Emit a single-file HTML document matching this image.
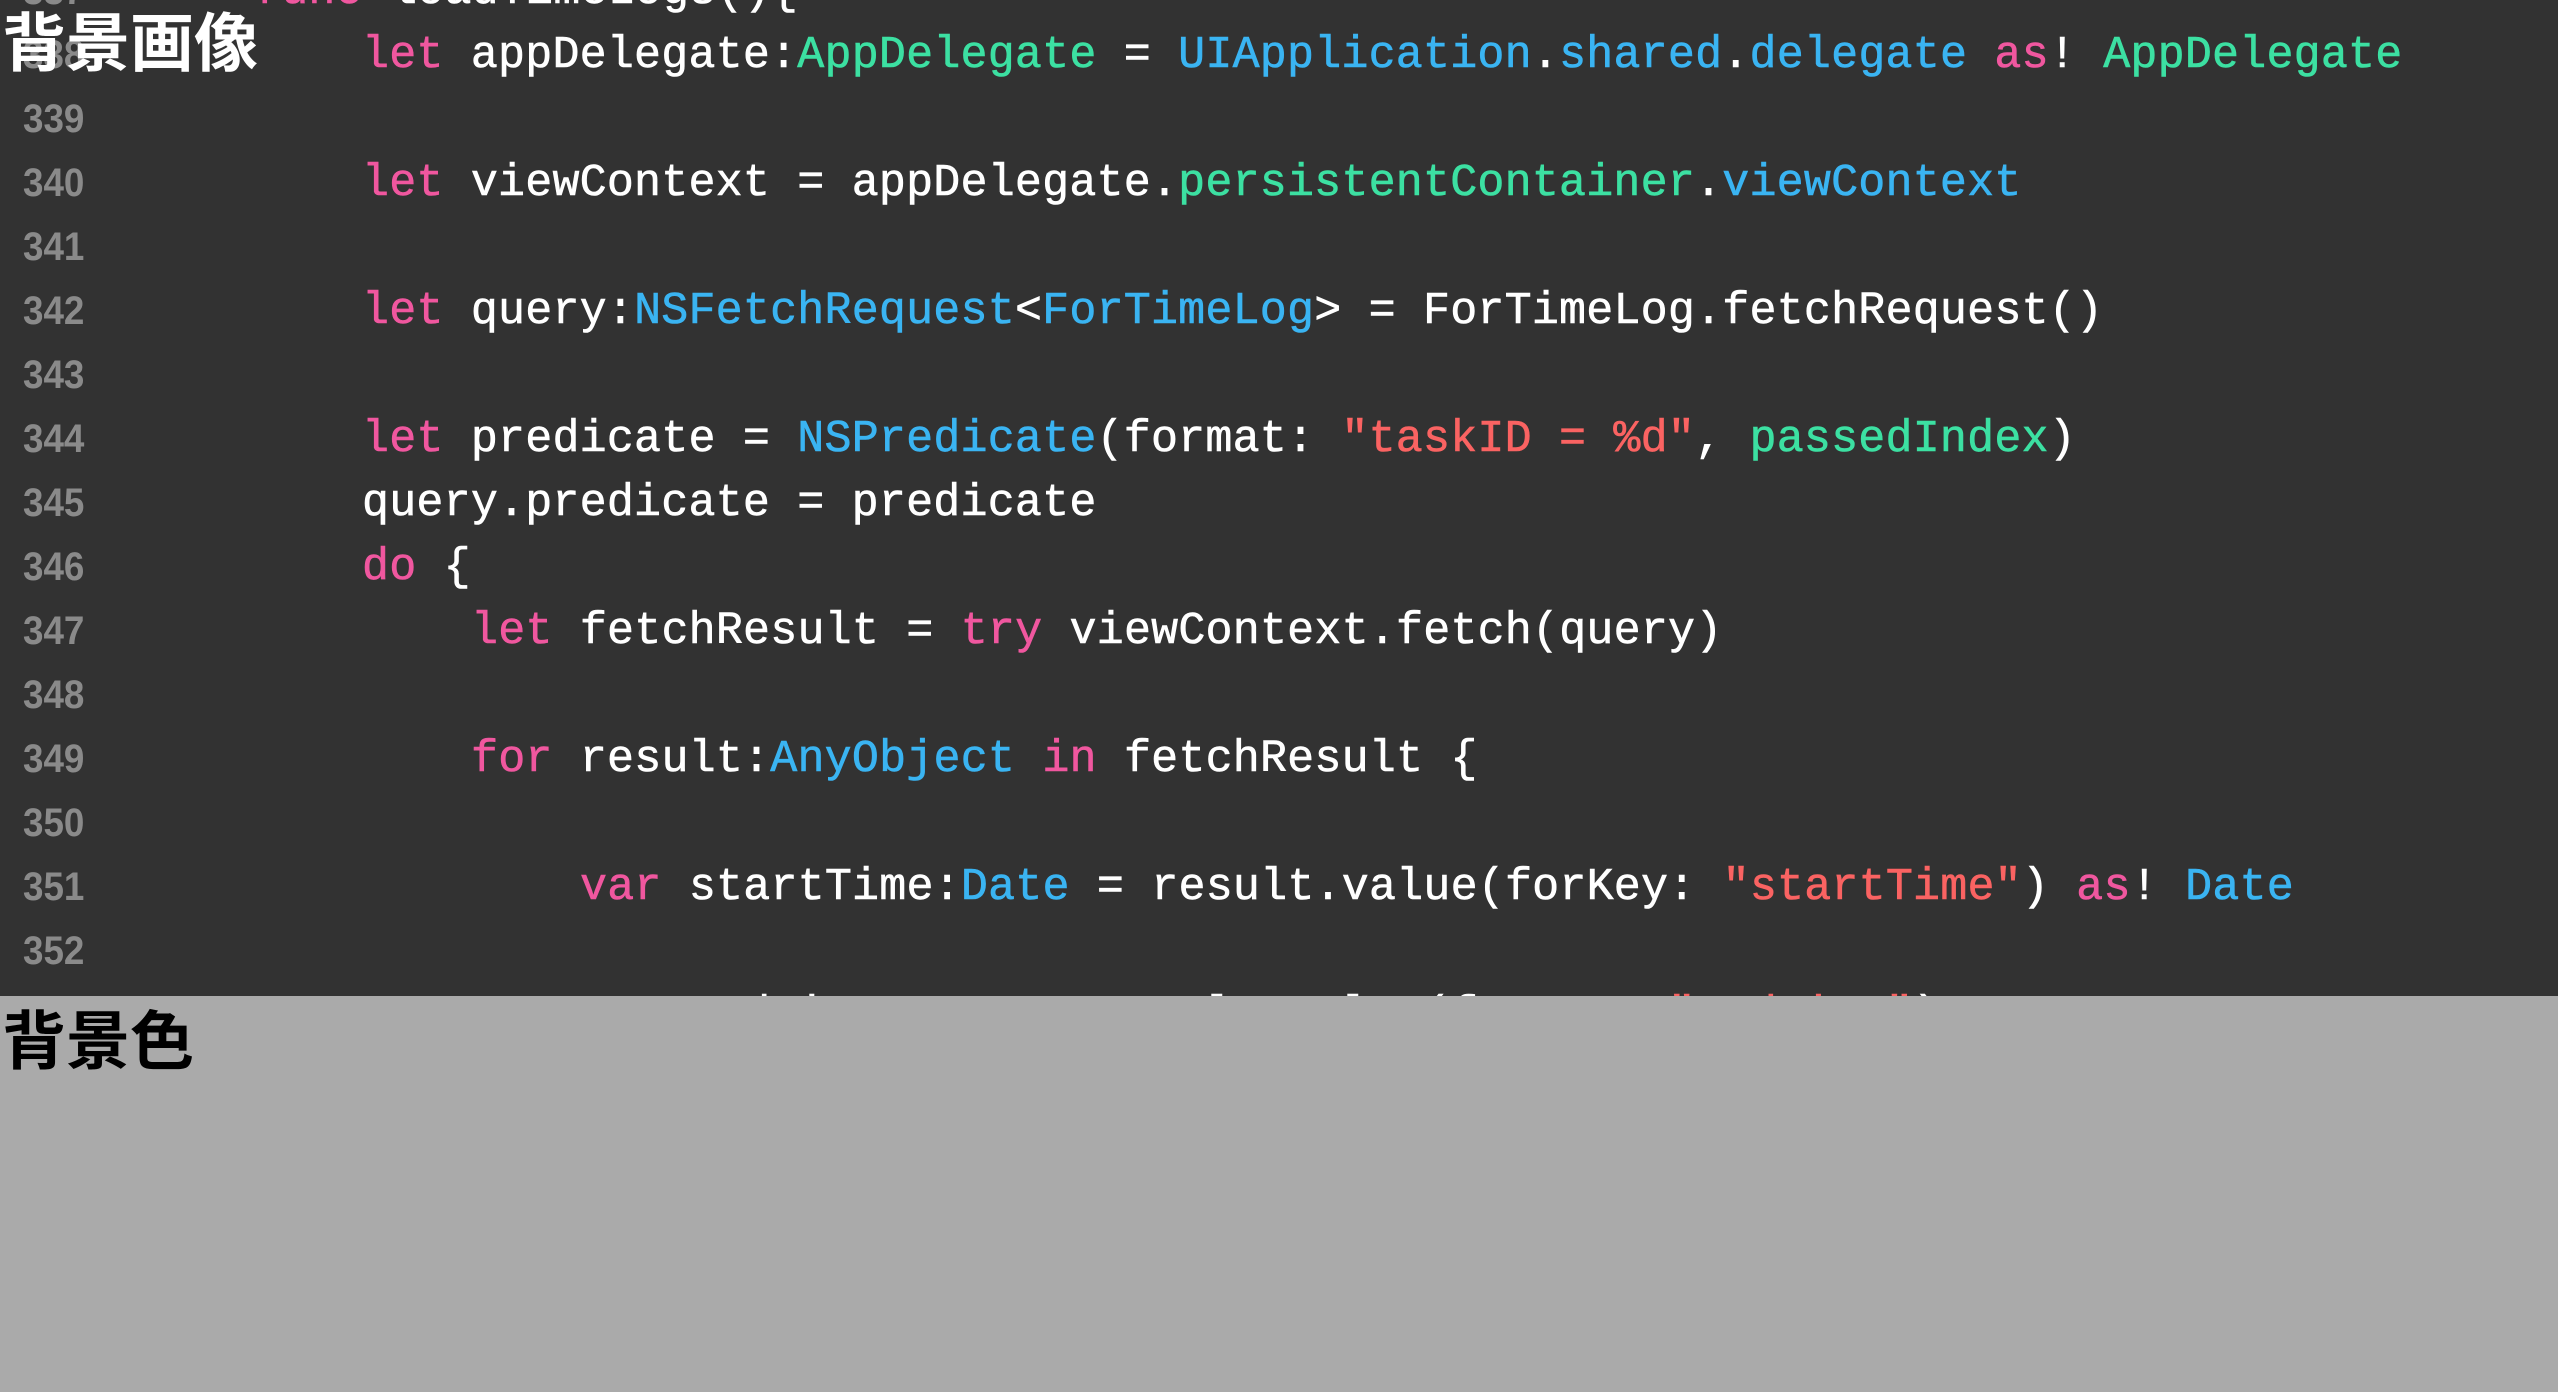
<!DOCTYPE html>
<html><head><meta charset="utf-8"><style>
html,body{margin:0;padding:0;width:2558px;height:1392px;overflow:hidden;background:#aaaaaa}
#code{position:absolute;left:0;top:0;width:2558px;height:996px;background:#323232;overflow:hidden}
.ln{position:absolute;left:23px;height:64px;line-height:64px;font-family:"Liberation Sans",sans-serif;font-weight:bold;font-size:40px;color:#8a8a8a;transform:scaleX(0.92);transform-origin:left center;margin-top:3px}
.c{position:absolute;height:64px;line-height:64px;font-family:"Liberation Mono",monospace;font-size:45px;color:#ffffff;white-space:pre;letter-spacing:0.2px;margin-top:4px;-webkit-text-stroke:0.6px currentColor}
.k{color:#f0579f}.g{color:#3ce0a2}.b{color:#3ab4f2}.r{color:#fa6362}
.lab{position:absolute;left:2px;font-family:"Liberation Sans","Noto Sans CJK JP",sans-serif;font-weight:bold;font-size:64px;line-height:64px}
</style></head><body>
<div id="code">
<div class="ln" style="top:-44px">337</div>
<div class="c" style="left:254px;top:-44px"><span class="k">func</span> loadTimeLogs(){</div>
<div class="ln" style="top:20px">338</div>
<div class="c" style="left:362px;top:20px"><span class="k">let</span> appDelegate:<span class="g">AppDelegate</span> = <span class="b">UIApplication</span>.<span class="b">shared</span>.<span class="b">delegate</span> <span class="k">as</span>! <span class="g">AppDelegate</span></div>
<div class="ln" style="top:84px">339</div>
<div class="ln" style="top:148px">340</div>
<div class="c" style="left:362px;top:148px"><span class="k">let</span> viewContext = appDelegate.<span class="g">persistentContainer</span>.<span class="b">viewContext</span></div>
<div class="ln" style="top:212px">341</div>
<div class="ln" style="top:276px">342</div>
<div class="c" style="left:362px;top:276px"><span class="k">let</span> query:<span class="b">NSFetchRequest</span>&lt;<span class="b">ForTimeLog</span>&gt; = ForTimeLog.fetchRequest()</div>
<div class="ln" style="top:340px">343</div>
<div class="ln" style="top:404px">344</div>
<div class="c" style="left:362px;top:404px"><span class="k">let</span> predicate = <span class="b">NSPredicate</span>(format: <span class="r">"taskID = %d"</span>, <span class="g">passedIndex</span>)</div>
<div class="ln" style="top:468px">345</div>
<div class="c" style="left:362px;top:468px">query.predicate = predicate</div>
<div class="ln" style="top:532px">346</div>
<div class="c" style="left:362px;top:532px"><span class="k">do</span> {</div>
<div class="ln" style="top:596px">347</div>
<div class="c" style="left:471px;top:596px"><span class="k">let</span> fetchResult = <span class="k">try</span> viewContext.fetch(query)</div>
<div class="ln" style="top:660px">348</div>
<div class="ln" style="top:724px">349</div>
<div class="c" style="left:471px;top:724px"><span class="k">for</span> result:<span class="b">AnyObject</span> <span class="k">in</span> fetchResult {</div>
<div class="ln" style="top:788px">350</div>
<div class="ln" style="top:852px">351</div>
<div class="c" style="left:580px;top:852px"><span class="k">var</span> startTime:<span class="b">Date</span> = result.value(forKey: <span class="r">"startTime"</span>) <span class="k">as</span>! <span class="b">Date</span></div>
<div class="ln" style="top:916px">352</div>
<div class="ln" style="top:980px">353</div>
<div class="c" style="left:580px;top:980px"><span class="k">var</span> endTime:<span class="b">Date</span> = result.value(forKey: <span class="r">"endTime"</span>) <span class="k">as</span>! <span class="b">Date</span></div>
<div class="lab" style="top:12px;color:#fff">背景画像</div>
</div>
<div class="lab" style="top:1010px;color:#000">背景色</div>
</body></html>
